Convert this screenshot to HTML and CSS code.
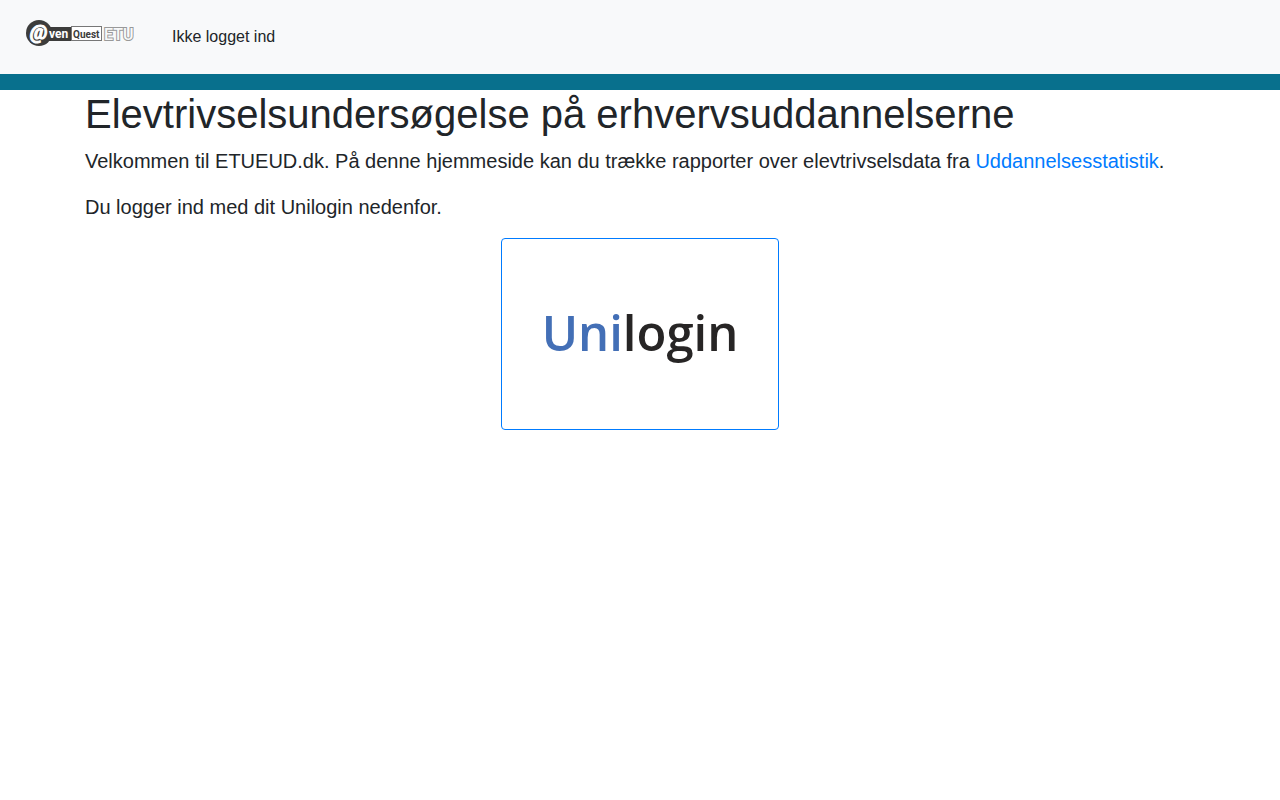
FILE: index.html
```html
<!DOCTYPE html>
<html lang="da">
<head>
<meta charset="utf-8">
<meta name="viewport" content="width=device-width, initial-scale=1">
<title>ETUEUD.dk</title>
<link rel="stylesheet" href="styles.css">
</head>
<body>
<header class="navbar">
  <a class="brand" href="#" aria-label="@venQuest ETU">
    <svg class="brand-logo" width="108" height="28" viewBox="0 0 108 28">
      <rect class="logo-dark" x="20" y="7" width="25" height="14"/>
      <ellipse class="logo-dark" cx="13" cy="13" rx="13" ry="13"/>
      <rect class="logo-frame" x="45.500" y="6.500" width="30" height="14"/>
      <text class="logo-at" x="4" y="19">@</text>
      <text class="logo-ven" x="23" y="18">ven</text>
      <text class="logo-quest" x="47" y="18">Quest</text>
      <text class="logo-etu" x="78" y="20">ETU</text>
    </svg>
  </a>
  <span class="login-status">Ikke logget ind</span>
</header>
<div class="accent-bar"></div>
<main class="container">
  <h1 class="title">Elevtrivselsundersøgelse på erhvervsuddannelserne</h1>
  <p class="lead">Velkommen til ETUEUD.dk. På denne hjemmeside kan du trække rapporter over elevtrivselsdata fra <a class="link" href="#">Uddannelsesstatistik</a>.</p>
  <p class="lead">Du logger ind med dit Unilogin nedenfor.</p>
  <div class="actions">
    <button class="login-button" type="button" aria-label="Unilogin">
      <svg width="252" height="178" viewBox="0 0 252 178">
        <text class="unilogin" x="126" y="106" text-anchor="middle"><tspan class="uni">Uni</tspan><tspan>login</tspan></text>
      </svg>
    </button>
  </div>
</main>
</body>
</html>
```

FILE: styles.css
```css
*, *::before, *::after { box-sizing: border-box; }

body {
  margin: 0;
  background: #fff;
  color: #212529;
  font-family: "Liberation Sans", Arial, sans-serif;
  font-size: 16px;
  line-height: 24px;
}

.navbar {
  display: flex;
  align-items: center;
  gap: 38px;
  min-height: 74px;
  padding: 8px 26px;
  background: #f8f9fa;
}

.brand { display: block; padding-bottom: 6px; }

.brand-logo { display: block; }

.logo-dark { fill: #3c3c3b; }
.logo-frame { fill: #fff; stroke: #777; }

.logo-at, .logo-ven, .logo-quest { font-family: Roboto, sans-serif; font-weight: 700; }
.logo-at { fill: #fff; stroke: #fff; stroke-width: 1px; font-size: 20px; font-style: italic; }
.logo-ven { fill: #fff; font-size: 12px; }
.logo-quest { fill: #3c3c3b; font-size: 10px; }
.logo-etu {
  fill: #f8f9fa;
  stroke: #999;
  stroke-width: 2px;
  paint-order: stroke;
  font-family: Roboto, sans-serif;
  font-size: 16px;
  font-weight: 500;
}

.accent-bar { height: 16px; background: #08708d; }

.container {
  max-width: 1140px;
  margin: 0 auto;
  padding: 0 15px;
}

.title {
  margin: 0 0 8px;
  font-size: 40px;
  font-weight: 500;
  line-height: 48px;
}

.lead {
  margin: 0 0 16px;
  font-size: 20px;
  font-weight: 300;
  line-height: 30px;
}

.link { color: #007bff; text-decoration: none; }
.link:hover { text-decoration: underline; }

.actions { display: flex; justify-content: center; }

.login-button {
  padding: 6px 12px;
  border: 1px solid #007bff;
  border-radius: 4px;
  background: #fff;
  cursor: pointer;
}

.login-button svg { display: block; }

.unilogin {
  fill: #272525;
  font-family: "Open Sans", sans-serif;
  font-size: 49px;
  font-weight: 600;
}

.uni { fill: #436fb6; }
```
